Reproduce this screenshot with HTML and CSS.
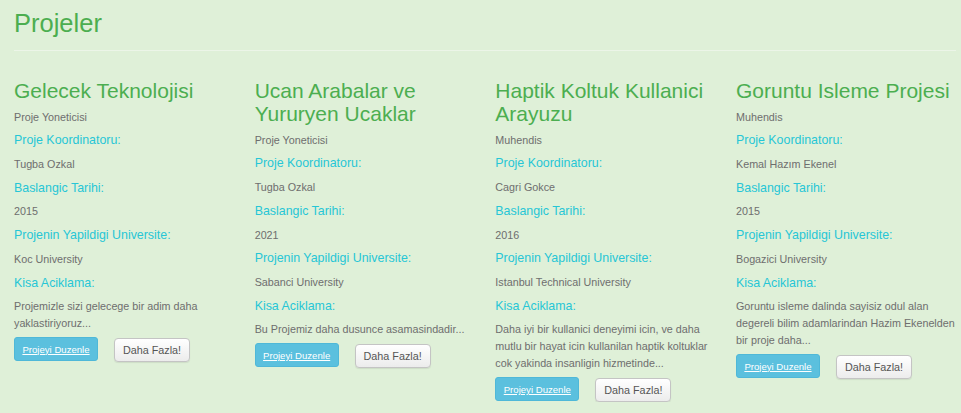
FILE: index.html
```html
<!DOCTYPE html>
<html lang="tr">
<head>
<meta charset="utf-8">
<title>Projeler</title>
<link rel="stylesheet" href="styles.css">
</head>
<body>
<div class="page">
  <h1 class="page-title">Projeler</h1>
  <hr class="divider">
  <div class="projects">
    <div class="project">
      <h3 class="project-title">Gelecek Teknolojisi</h3>
      <p class="value">Proje Yoneticisi</p>
      <p class="label">Proje Koordinatoru:</p>
      <p class="value">Tugba Ozkal</p>
      <p class="label">Baslangic Tarihi:</p>
      <p class="value">2015</p>
      <p class="label">Projenin Yapildigi Universite:</p>
      <p class="value">Koc University</p>
      <p class="label">Kisa Aciklama:</p>
      <p class="desc">Projemizle sizi gelecege bir adim daha yaklastiriyoruz...</p>
      <div class="actions"><a class="btn btn-info" href="#">Projeyi Duzenle</a><button class="btn btn-default">Daha Fazla!</button></div>
    </div>
    <div class="project">
      <h3 class="project-title">Ucan Arabalar ve Yururyen Ucaklar</h3>
      <p class="value">Proje Yoneticisi</p>
      <p class="label">Proje Koordinatoru:</p>
      <p class="value">Tugba Ozkal</p>
      <p class="label">Baslangic Tarihi:</p>
      <p class="value">2021</p>
      <p class="label">Projenin Yapildigi Universite:</p>
      <p class="value">Sabanci University</p>
      <p class="label">Kisa Aciklama:</p>
      <p class="desc">Bu Projemiz daha dusunce asamasindadir...</p>
      <div class="actions"><a class="btn btn-info" href="#">Projeyi Duzenle</a><button class="btn btn-default">Daha Fazla!</button></div>
    </div>
    <div class="project">
      <h3 class="project-title">Haptik Koltuk Kullanici Arayuzu</h3>
      <p class="value">Muhendis</p>
      <p class="label">Proje Koordinatoru:</p>
      <p class="value">Cagri Gokce</p>
      <p class="label">Baslangic Tarihi:</p>
      <p class="value">2016</p>
      <p class="label">Projenin Yapildigi Universite:</p>
      <p class="value">Istanbul Technical University</p>
      <p class="label">Kisa Aciklama:</p>
      <p class="desc">Daha iyi bir kullanici deneyimi icin, ve daha mutlu bir hayat icin kullanilan haptik koltuklar cok yakinda insanligin hizmetinde...</p>
      <div class="actions"><a class="btn btn-info" href="#">Projeyi Duzenle</a><button class="btn btn-default">Daha Fazla!</button></div>
    </div>
    <div class="project">
      <h3 class="project-title">Goruntu Isleme Projesi</h3>
      <p class="value">Muhendis</p>
      <p class="label">Proje Koordinatoru:</p>
      <p class="value">Kemal Hazım Ekenel</p>
      <p class="label">Baslangic Tarihi:</p>
      <p class="value">2015</p>
      <p class="label">Projenin Yapildigi Universite:</p>
      <p class="value">Bogazici University</p>
      <p class="label">Kisa Aciklama:</p>
      <p class="desc">Goruntu isleme dalinda sayisiz odul alan degereli bilim adamlarindan Hazim Ekenelden bir proje daha...</p>
      <div class="actions"><a class="btn btn-info" href="#">Projeyi Duzenle</a><button class="btn btn-default">Daha Fazla!</button></div>
    </div>
  </div>
</div>
</body>
</html>
```

FILE: styles.css
```css
html, body {
  margin: 0;
  padding: 0;
  background: #dff0d8;
}
body {
  font-family: "Liberation Sans", Arial, sans-serif;
  color: #6e6e6e;
}
.page {
  padding: 9px 3px 0 14px;
}
.page-title {
  margin: 0;
  font-size: 25.5px;
  line-height: 1.1;
  font-weight: normal;
  color: #4cae50;
}
.divider {
  margin: 13px 2px 0 0;
  border: 0;
  border-top: 1px solid #ecf5e8;
  height: 0;
}
.projects {
  display: grid;
  grid-template-columns: repeat(4, 1fr);
  column-gap: 18.67px;
  align-items: start;
  margin-top: 28px;
}
.project-title {
  margin: 0 0 3.5px;
  font-size: 21px;
  line-height: 1.1;
  font-weight: normal;
  color: #4cae50;
}
.value, .label {
  margin: 0;
  line-height: 23.7px;
}
.value {
  font-size: 10.75px;
  color: #6e6e6e;
}
.label {
  font-size: 12.4px;
  color: #26c6d6;
}
.desc {
  margin: 2.5px 0 0;
  font-size: 10.75px;
  line-height: 17px;
  color: #6e6e6e;
}
.actions {
  display: flex;
  align-items: flex-start;
  gap: 16px;
  margin-top: 5.5px;
}
.btn {
  box-sizing: border-box;
  height: 24px;
  font-family: "Liberation Sans", Arial, sans-serif;
  border-radius: 3px;
  display: inline-flex;
  align-items: center;
  justify-content: center;
}
.btn-info {
  width: 84px;
  background: #5bc0de;
  border: 1px solid #4fb8d8;
  color: #fff;
  font-size: 9.6px;
  text-decoration: underline;
}
.btn-default {
  margin-top: 1px;
  width: 76px;
  padding: 0;
  background: linear-gradient(#ffffff, #ececec);
  border: 1px solid #c4c4c4;
  border-radius: 4px;
  color: #555;
  font-size: 10.8px;
  box-shadow: 0 1px 1px rgba(0,0,0,0.08);
}
```
